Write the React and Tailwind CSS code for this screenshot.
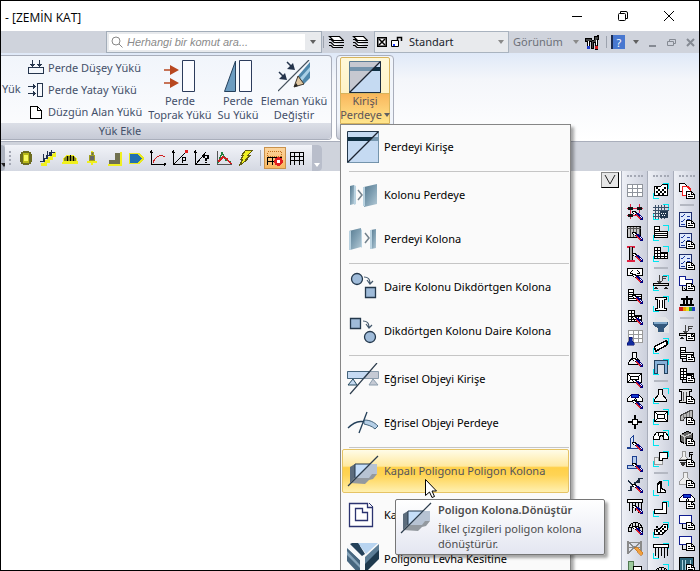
import React from "react";

/* ---------- shared icon parts ---------- */

const Px = ({ children, size = "size-4" }) => (
  <svg viewBox="0 0 16 16" className={`${size} shrink-0`} fill="none" stroke="#000" shapeRendering="crispEdges" aria-hidden="true">
    {children}
  </svg>
);

const Big = ({ children }) => (
  <svg viewBox="0 0 32 32" className="size-8 shrink-0" fill="none" aria-hidden="true">
    {children}
  </svg>
);

const Brush = () => (
  <g stroke="none">
    <path d="M5 7h4v1h1v1h1v3H9v-1H8v-1H6V9H5z" fill="#000" />
    <path d="M6 8h2v1h1v1H7V9H6z" fill="#fff" />
    <path d="M9 9h3v1h1v1h1v1h1v1h1v3h-3v-1h-1v-1h-1v-1h-1v-1H9z" fill="#000080" />
    <path d="M9 10h1v1h1v1h1v1h1v1h1v1h-2v-1h-1v-1h-1v-1h-1z" fill="#e0202c" />
    <path d="M13 12h1v1h1v1h-1v-1h-1z" fill="#fff" />
  </g>
);

const Doc = () => (
  <g>
    <path d="M7.5 8.5h5l3 3v4h-8z" fill="#fff" />
    <path d="M12.5 8.5v3h3M9 11.5h2M9 13.5h5" />
  </g>
);

const Corners = () => <path d="M10 .5h5.5V6M.5 10v5.5H6" stroke="#00e5f0" />;

const Caret = ({ className = "fill-[#606060]" }) => (
  <svg viewBox="0 0 6 4" className={`h-1 w-1.5 shrink-0 ${className}`} aria-hidden="true">
    <path d="M0 0h6L3 4z" />
  </svg>
);

/* ---------- vertical toolbars ---------- */

const rows = <path d="M1.500 1.500h5v5h8v6h-13zM1 4.500h5M1 6.500h6M1 8.500h13M1 10.500h13" fill="#fff" />;
const cells = <path d="M1.500 1.500h6v5h7v6h-13zM1 4.500h6M1 7.500h13M1 10.500h13M4.500 1v11M7.500 6v6M11.500 7v5" fill="#fff" />;
const footing = <path d="M5.500 1.500h4v5l4 5v2h-12v-2l4-5z" fill="#f4f4f4" />;
const tie = (
  <g>
    <path d="M.5 5.500l3-3h9l3 3v3h-5l-2-3-2 3h-6z" fill="#fff" />
    <path d="M4.500 1.500h7v3h-7z" fill="#1038d0" stroke="#000080" />
  </g>
);
const load = (
  <g>
    <path d="M6.500 0v8M4.500 6l2 2 2-2M9.500 6V1.500H14M9.500 3.500H13" stroke="#444" />
    <path d="M.5 8.500h15v2H.5z" fill="#ddd" />
    <path d="M3 11l-2 3h4zM13 11l-2 3h4z" fill="#222" stroke="none" />
  </g>
);
const column = <path d="M2.500 1.500h11v2h-2v9h2v2h-11v-2h2v-9h-2zM6.500 4v8M9.500 4v8" fill="#fff" />;
const dome = <path d="M1.500 12.500v-4l3-4 3-1h2l3 1 3 4v4h-3v-3l-2-2h-4l-2 2v3zM5.500 5v4M8.500 4v4M11.500 5v4M1 8.500h4M11 8.500h4" fill="#ddd" />;
const fringe = <path d="M.5 1.500h15v3H.5zM2.500 4v9M5.500 4v11M8.500 4v9M11.500 4v11M14.500 4v9" fill="#fff" />;
const checks = (
  <g>
    <path d="M.5.5h12v14H.5z" fill="#dfe9fb" stroke="#1c2c6c" />
    <path d="M2 4l1 1 3-3M2 9l1 1 3-3M8 4.500h3M8 7.500h3M2 12.500h4" stroke="#1c38a0" />
  </g>
);
const Checker = ({ d }) => (
  <g>
    <path d={d} fill="#fff" />
    <path d="M3 4h2v2H3zM5 6h2v2H5zM3 8h2v2H3zM7 8h2v2H7zM5 10h2v2H5zM9 10h2v2H9zM9 6h2v2H9zM11 8h2v2h-2zM11 4h2v2h-2z" fill="#000" stroke="none" />
  </g>
);

const modifyTools = [
  ["Aks", <path d="M.5 1.500h15v12H.5zM.5 5.500h15M.5 9.500h15M5.500 1.500v12M10.500 1.500v12" fill="#fff" stroke="#8f949c" />],
  ["Kolon düzenle", <g><path d="M3.500 0v15M12.500 0v9M0 4.500h16M0 11.500h9" stroke="#e02040" /><path d="M1 3h5v3H1zM10 3h5v3h-5zM1 10h5v3H1z" fill="#111" stroke="none" /><Brush /></g>],
  ["Perde düzenle", <g><path d="M.5 1.500h13v11H.5z" fill="#c8c8c8" /><path d="M3.500 2v10M6.500 2v10M9.500 2v10M12 2v8M0 3.500h14" stroke="#555" /><Brush /></g>],
  ["Boy düzenle", <g><path d="M0 .5h8M0 14.500h8" stroke="#e02040" strokeWidth="2" /><path d="M2.500 1v13M5.500 1v13" /><path d="M3 1h2v13H3z" fill="#aaa" stroke="none" /><Brush /></g>],
  ["Kiriş düzenle", <g><path d="M.5 1.500h15v7H.5zM3 6l3-3M13 6l-3-3M3 6h3M10 6h3" fill="#fff" /><Brush /></g>],
  ["Döşeme düzenle", <g>{rows}<Brush /></g>],
  ["Nervür düzenle", <g>{cells}<Brush /></g>],
  ["Temel aks", <g><path d="M1.500.5h14v12h-14zM1.500 4.500h14M1.500 8.500h14M6.500.5v12M11.500.5v12" fill="#fff" stroke="#999" /><path d="M2 7h3v4l2 2v2H0v-2l2-2z" fill="#102a9c" stroke="#000060" strokeWidth=".5" /></g>],
  ["Tekil temel", <g>{footing}<Brush /></g>],
  ["Radye", <g><path d="M.5 1.500h14v9H.5zM3.500 4.500h8v3h-8zM.5 1.500l3 3M14.500 1.500l-3 3M.5 10.500l3-3" fill="#fff" /><Brush /></g>],
  ["Sürekli temel", <g>{tie}<Brush /></g>],
  ["Nokta", <g><path d="M8 1v14M1 8h14" strokeWidth="2" /><path d="M5.500 5.500h5v5h-5z" fill="#fff" /></g>],
  ["Kule", <g><path d="M3.500 12.500v-9l3-3v8l4 2v3h-10v-1z" fill="#dbe6f8" stroke="#1c3f90" /><Brush /></g>],
  ["İstinat", <g><path d="M5.500.5h4v9h4v3h-13v-3h5z" fill="#b8cdec" stroke="#1c3f90" /><Brush /></g>],
  ["Merdiven", <g><path d="M1 13.500h3v-4h4v-4h4v-4h4M1 4l5 4M5 9l8-7" stroke="#1c2c40" strokeWidth="1.500" /><Brush /></g>],
  ["Kazık", <g>{fringe}<Brush /></g>],
  ["Kubbe", <g>{dome}<Brush /></g>],
  ["Çapraz", <g><path d="M1 2l13 11M14 2L1 13M1 1v13M14 1v13M1 2.500h13M1 7.500h13" stroke="#8a8a8a" strokeWidth="1.500" /><path d="M7 8l3-1 6 6-2 3z" fill="#f0a040" stroke="#b06010" strokeWidth=".5" /></g>],
  ["Kesit", <g><path d="M1 0h5v16H1z" fill="#9cc89c" stroke="#507850" /><path d="M6.500 5.500h8V16h-8z" fill="#fff" /></g>],
];

const drawTools = [
  ["Poligon kolon", <g><Corners /><Checker d="M1.500 3.500h6l2-2h5v11h-13z" /></g>],
  ["Izgara", <g><Corners /><path d="M2.500 1v14M5.500 1v14M8.500 1v14M11.500 1v14M0 3.500h16M0 6.500h16M0 9.500h14M0 12.500h14" stroke="#3c5068" /><path d="M7 7h8v7H7z" fill="#233850" stroke="none" /><path d="M8 9h6M9 11.500h4" stroke="#fff" strokeDasharray="1 1" /></g>],
  ["Döşeme", <g><Corners />{rows}</g>],
  ["Kaset", <g><Corners />{cells}</g>],
  null,
  ["Kiriş yükü", <g><Corners />{load}</g>],
  ["Kolon", <g><Corners />{column}</g>],
  ["Başlık", <g stroke="none"><path d="M2 0h10l4 4v12H2z" fill="#e3e5e8" /><path d="M0 5h15v3l-4 3v4H5v-4L0 8z" fill="#34587c" /><path d="M1 5h13v2H1z" fill="#7ea6c8" /></g>],
  ["Perde", <g><Corners /><path d="M1.500 8.500l12-6 1 4-12 7z" fill="#fff" strokeWidth="1.500" /></g>],
  ["Portal", <g><Corners /><path d="M1.500 14.500v-13h13v13h-3v-9h-7v9z" fill="#86b0d8" stroke="#23405c" /></g>],
  null,
  ["Tekil", <g><Corners />{footing}</g>],
  ["Radye plak", <g><Corners /><path d="M1.500 2.500h13v10h-13z" fill="#fff" strokeWidth="1.500" /><path d="M4.500 5.500h7v4h-7zM1.500 2.500l3 3M14.500 2.500l-3 3M1.500 12.500l3-3M14.500 12.500l-3-3" /></g>],
  ["Bağ kirişi", <g><Corners /><path d="M.5 6.500l3-4h9l3 4v3h-5v-3l-2-1-2 1v3h-6zM5.500 3v3M10.500 3v3" fill="#fff" /></g>],
  ["Kademe", <g><Corners /><path d="M1.500 6.500h4v3h4v4h-8z" fill="#eee" stroke="#999" /><path d="M6.500 1.500h8v6h-5v2h-3z" fill="#fff" /></g>],
  null,
  ["Kule çiz", <g><Corners /><path d="M4.500 12.500v-8l3-3h1v7l4 2v2zM7.500 2v10" fill="#fff" strokeWidth="1.500" /></g>],
  ["İstinat çiz", <g><Corners /><path d="M9.500 1.500h4v11h-12v-4h8z" fill="#fff" strokeWidth="1.500" /></g>],
  ["Rampa", <g><Corners /><Checker d="M1.500 7.500h5l4-5h4v5l-5 5h-8z" /></g>],
  ["Kazık çiz", <g><Corners />{fringe}</g>],
  ["Kubbe çiz", <g><Corners />{dome}</g>],
];

const reportTools = [
  ["Kopyala", <g><path d="M.5.5h5l3 3v5h-8z" fill="#fff" /><path d="M3.500 3.500h5l3 3v6h-8z" fill="#fff" stroke="#f02020" strokeWidth="1.500" /><Doc /></g>],
  null,
  ["Kolon kontrol", <g>{checks}<Doc /></g>],
  ["Kiriş kontrol", <g>{checks}<Doc /></g>],
  ["Perde kontrol", <g>{checks}<Doc /></g>],
  ["Poligon raporu", <g><path d="M.5 1.500h6v3h7v6H.5z" fill="#fff" stroke="#101c90" /><path d="M3.500 11v4h3M5 13l2 2" /><Doc /></g>],
  ["Renk skalası", <g><path d="M2 2.500h12M8 0v8M1 8.500h14M4.500 3v5M11.500 3v5" strokeWidth="2" /><path d="M0 11h4v4H0z" fill="#d02020" stroke="none" /><path d="M4 11h3v4H4z" fill="#f0a000" stroke="none" /><path d="M7 11h3v4H7z" fill="#e8e020" stroke="none" /><path d="M10 11h3v4h-3z" fill="#20a040" stroke="none" /><path d="M13 11h3v4h-3z" fill="#2040c0" stroke="none" /></g>],
  null,
  ["Yük raporu", <g>{load}<Doc /></g>],
  ["Döşeme raporu", <g>{rows}<path d="M3.500 12v3h3" /><Doc /></g>],
  ["Kaset raporu", <g>{cells}<path d="M3.500 12v3h3" /><Doc /></g>],
  ["Kolon raporu", <g><path d="M.5 1.500h12v2h-2v9h2v2H.5v-2h2v-9h-2z" fill="#ddd" /><path d="M4.500 4v9M7.500 4v9" stroke="#555" /><Doc /></g>],
  ["Konsol raporu", <g><path d="M1.500 6.500l10-5h2v8l-8-1-1 3h-3z" fill="#bbb" stroke="#444" /><path d="M4.500 5v4M7.500 4v5M10.500 3v5" stroke="#777" /><Doc /></g>],
  ["Hacim raporu", <g><path d="M1.500 4.500l7-3 5 2v8l-8 2-4-2z" fill="#666" /><path d="M1.500 4.500l4 2 8-3M5.500 6v8" stroke="#ccc" /><Doc /></g>],
  ["Zemin yükü", <g><path d="M3.500.5h3v5l3 3h-9l3-3z" fill="#eee" stroke="#999" /><path d="M0 9.500h8M10.500 6V1.500H14M10.500 3.500h3M12.500 4v4" /><path d="M1 11h6l-2 4H3z" fill="#333" stroke="none" /><Doc /></g>],
  ["Temel raporu", <g><path d="M4.500.5h4v5l4 4v3h-12v-3l4-4z" fill="#eee" stroke="#999" /><Doc /></g>],
  ["Bağ raporu", <g>{tie}<Doc /></g>],
  ["Plak raporu", <g><path d="M.5 1.500h12v8H.5z" fill="#fff" stroke="#101c90" /><path d="M3.500 10v4h3" /><Doc /></g>],
  ["Radye raporu", <g><path d="M.5 1.500h12v8H.5z" fill="#fff" stroke="#101c90" /><path d="M3.500 10v4h3" /><Doc /></g>],
  ["Cephe raporu", <g><path d="M.5 1.500h14v13H.5z" fill="#2a6478" /><path d="M3.500 4v10M6.500 4v10M11.500 4v6" stroke="#a8d0dc" /><Doc /></g>],
];

const VerticalBar = ({ label, tools }) => (
  <div role="toolbar" aria-label={label} className="flex w-[26px] flex-col items-center border-l border-[#a9aebb] bg-linear-to-r from-[#eef0f6] to-[#ccd0dc]">
    <div className="mt-1 mb-[3px] h-0.5 w-4 border-t-2 border-dotted border-[#a4a8b4]"></div>
    {tools.map((tool, i) =>
      tool ? (
        <button key={i} aria-label={tool[0]} className="flex h-[21px] w-full shrink-0 items-center justify-center">
          <Px>{tool[1]}</Px>
        </button>
      ) : (
        <div key={i} className="flex h-2 shrink-0 items-center">
          <span className="h-0.5 w-3.5 bg-[#b4b8c2]"></span>
        </div>
      )
    )}
  </div>
);

/* ---------- menu icons ---------- */

const BeamToWall = ({ flip }) => (
  <Big>
    <path d="M.5.500h31v31H.5z" fill="#c5daf2" />
    <path d="M1 6h30v4H1z" fill="#0f2f42" />
    {flip ? (
      <path d="M31 1v30H1z" fill="#c5daf2" fillOpacity=".5" />
    ) : (
      <g>
        <path d="M1 1h30L1 31z" fill="#c6c8d0" />
        <path d="M1 6h25l-4 4H1z" fill="#7494ac" />
      </g>
    )}
    {flip && <path d="M26 6h5v4h-9z" fill="#7898b0" />}
    <path d="M.5.500h31v31H.5z" stroke={flip ? "#24384c" : "#5c7c94"} />
    <path d="M31.500.500v31H.5" stroke={flip ? "#7494ac" : "#1c2c40"} />
    <path d="M.5 31.500l31-31" stroke="#1c2430" strokeWidth="1.200" />
  </Big>
);

const SteelDefs = () => (
  <defs>
    <linearGradient id="steel" x1="0" y1="0" x2="1" y2="1">
      <stop offset="0" stopColor="#55798f" />
      <stop offset=".5" stopColor="#7f9fb2" />
      <stop offset="1" stopColor="#b4cad6" />
    </linearGradient>
  </defs>
);

const ColumnToWall = () => (
  <Big>
    <SteelDefs />
    <path d="M3 7l4-1v19l-4 1z" fill="url(#steel)" />
    <path d="M7 6l2 1v18l-2 1z" fill="#b9d2e0" />
    <path d="M11 11l4 5-4 5" stroke="#74828c" strokeWidth="1.500" />
    <path d="M17 8l13-3v20l-13 3z" fill="url(#steel)" />
    <path d="M16 8h2v19h-2z" fill="#b9d2e0" />
  </Big>
);

const WallToColumn = () => (
  <Big>
    <SteelDefs />
    <path d="M2 8l12-3v19L3 27z" fill="url(#steel)" />
    <path d="M2 8h2v19H2zM14 6l1 1v17l-1 1z" fill="#b9d2e0" />
    <path d="M18 10l4 5-4 5" stroke="#74828c" strokeWidth="1.500" />
    <path d="M24 7l5-1v19l-5 1z" fill="url(#steel)" />
    <path d="M23 7h2v19h-2z" fill="#b9d2e0" />
  </Big>
);

const CircleToSquare = () => (
  <Big>
    <circle cx="10" cy="8" r="5.500" fill="#9fbbd9" stroke="#24384c" strokeWidth="1.300" />
    <path d="M17 6c5 0 6 3 6 6M20 9l3 4 3-3" stroke="#44586c" strokeWidth="1.200" />
    <path d="M18.500 16.500h10v10h-10z" fill="#9fbbd9" stroke="#24384c" strokeWidth="1.300" />
  </Big>
);

const SquareToCircle = () => (
  <Big>
    <path d="M3.500 3.500h10v10h-10z" fill="#9fbbd9" stroke="#24384c" strokeWidth="1.300" />
    <path d="M16 6c5 0 6 3 6 6M19 9l3 4 3-3" stroke="#44586c" strokeWidth="1.200" />
    <circle cx="23" cy="22" r="5.500" fill="#9fbbd9" stroke="#24384c" strokeWidth="1.300" />
  </Big>
);

const CurveToBeam = () => (
  <Big>
    <path d="M.5 8.500h31v7H.5z" fill="#c5cad4" stroke="#8a9cac" />
    <path d="M23 8.500H.5v7H17z" fill="#c5daf2" stroke="#44647c" />
    <path d="M6 16l-5 6h9z" fill="#c5daf2" stroke="#24485c" />
    <path d="M26 16l-4 6h9z" fill="#c5cad4" stroke="#8a9cac" />
    <path d="M3 31L30 0" stroke="#2c3c4c" strokeWidth="1.200" />
  </Big>
);

const CurveToWall = () => (
  <Big>
    <path d="M1 21C9 13 17 12 30 20" stroke="#24405a" strokeWidth="1.300" />
    <path d="M17 13c6 0 10 2 14 6l-3 3c-3-3-7-4-11-5z" fill="#b4cee6" stroke="#44647c" />
    <path d="M20 5l-8 21" stroke="#24405a" strokeWidth="1.300" />
  </Big>
);

const PolygonColumn = () => (
  <Big>
    <path d="M3 12l5-3v14l-5 5z" fill="#5c6c7c" />
    <path d="M3 28l5-6h10l4-3h8l-4 5-4 1-4 4z" fill="#93999f" />
    <path d="M8 9h22v10h-5l-3 4H8z" fill="#b7c3d3" />
    <path d="M8 9h16L8 23z" fill="#c5def8" />
    <path d="M8 23V9h15" stroke="#24384c" />
    <path d="M1 31L31 1" stroke="#2c3c4c" strokeWidth="1.200" />
  </Big>
);

const PolygonSlab = () => (
  <Big>
    <path d="M2.500 4.500h18v4h5v19h-23z" fill="#fff" stroke="#2c3470" strokeWidth="1.300" />
    <path d="M8.500 9.500h7v4h5v8h-12z" fill="#fff" stroke="#2c3470" strokeWidth="1.300" />
    <path d="M22 4l4 4" stroke="#2c3470" />
  </Big>
);

const PlateSection = () => (
  <Big>
    <path d="M0 4l13 13v15L0 18z" fill="#46667f" />
    <path d="M0 8l13 14v3L0 12z" fill="#86a4ba" />
    <path d="M0 2h4l13 13v17h-4V17L0 5z" fill="#f6f8fa" />
    <path d="M5 0h8v3l5 8-3 2L3 1z" fill="#24415a" />
    <path d="M11 0h20L19 11z" fill="#b8d4f0" />
    <path d="M32 1v13L18 29V14z" fill="#5c7d96" />
    <path d="M32 7v9L18 30V21z" fill="#1f3a4e" />
  </Big>
);

const menuItems = [
  { label: "Perdeyi Kirişe", icon: <BeamToWall flip /> },
  null,
  { label: "Kolonu Perdeye", icon: <ColumnToWall /> },
  { label: "Perdeyi Kolona", icon: <WallToColumn /> },
  null,
  { label: "Daire Kolonu Dikdörtgen Kolona", icon: <CircleToSquare /> },
  { label: "Dikdörtgen Kolonu Daire Kolona", icon: <SquareToCircle /> },
  null,
  { label: "Eğrisel Objeyi Kirişe", icon: <CurveToBeam /> },
  { label: "Eğrisel Objeyi Perdeye", icon: <CurveToWall /> },
  null,
  { label: "Kapalı Poligonu Poligon Kolona", icon: <PolygonColumn />, active: true },
  { label: "Kapalı Poligonu Döşemeye", icon: <PolygonSlab /> },
  { label: "Poligonu Levha Kesitine", icon: <PlateSection /> },
];

const DropMenu = () => (
  <div role="menu" className="absolute top-full left-0 z-10 w-[231px] border border-[#868686] bg-[#fafafa] text-black shadow-[3px_3px_3px_rgba(0,0,0,0.35)]">
    {menuItems.map((item, i) =>
      item ? (
        <button
          key={i}
          role="menuitem"
          className={
            item.active
              ? "mx-px flex h-11 w-[227px] items-center gap-[5px] rounded-xs border border-[#e5c365] bg-[linear-gradient(#fffce8,#ffe9a0_38%,#ffd048_42%,#ffd455_60%,#fff0b0)] pl-1 text-left text-[#54545c]"
              : "flex h-11 w-full items-center gap-[5px] pl-1.5 text-left"
          }
        >
          {item.icon}
          {item.label}
        </button>
      ) : (
        <div key={i} className="flex h-1 items-center pr-px pl-2">
          <span className="h-px w-full bg-[#c5c5c5]"></span>
        </div>
      )
    )}

    {/* tooltip and pointer of the hovered item */}
    <div role="tooltip" className="absolute top-[374px] left-[54px] flex h-14 w-[210px] gap-1.5 rounded-xs border border-[#767676] bg-linear-to-b from-white to-[#e4e6f1] pt-0.5 pl-1 text-[#4c4c4c] shadow-[3px_3px_3px_rgba(0,0,0,0.35)]">
      <PolygonColumn />
      <div className="leading-[15px]">
        <p className="font-semibold">Poligon Kolona.Dönüştür</p>
        <p className="mt-1">
          İlkel çizgileri poligon kolona
          <br />
          dönüştürür.
        </p>
      </div>
    </div>
    <svg viewBox="0 0 12 19" className="absolute top-[354px] left-[84px] h-[19px] w-3" aria-hidden="true">
      <path d="M.5.500v16l4-3.500 2.500 5.500 2.500-1L7 12h4.500z" fill="#fff" stroke="#000" />
    </svg>
  </div>
);

/* ---------- ribbon ---------- */

const loadButtons = [
  {
    label: "Perde Düşey Yükü",
    icon: <path d="M.5 7.500h15v6H.5zM4.500 0v6M11.500 0v6M2.500 4l2 2 2-2M9.500 4l2 2 2-2" stroke="#24344c" />,
  },
  {
    label: "Perde Yatay Yükü",
    icon: <path d="M9.500 1.500h5v13h-5zM0 4.500h7M0 11.500h7M5 2.500l2 2-2 2M5 9.500l2 2-2 2" stroke="#24344c" />,
  },
  {
    label: "Düzgün Alan Yükü",
    icon: <path d="M2.500 2.500h7l4 4v8h-11zM9.500 2.500v4h4" fill="#fff" />,
  },
];

const SoilIcon = () => (
  <Big>
    <path d="M0 10h9M0 23h9" stroke="#b84820" strokeWidth="1.500" />
    <path d="M6 5l9 5-9 5zM6 18l9 5-9 5z" fill="#b84820" />
    <path d="M18.500.500h12v31h-12z" fill="#fbfcff" stroke="#2c3c5c" />
  </Big>
);

const WaterIcon = () => (
  <Big>
    <path d="M13.500 1v30.500h-11z" fill="#6c9cc0" stroke="#24405c" />
    <path d="M17.500.500h12v31h-12z" fill="#fbfcff" stroke="#2c3c5c" />
  </Big>
);

const EditIcon = () => (
  <Big>
    <path d="M0 31L31 0" stroke="#44505c" strokeWidth="1.200" />
    <path d="M9 2l5 5M1 12l5 5" stroke="#24344c" strokeWidth="1.500" />
    <path d="M17 10l-8-1 6-6zM9 20l-8-1 6-6z" fill="#24344c" />
    <path d="M20 16L32 2v16l-7 7z" fill="#4f88ac" />
    <path d="M22 18L32 7v4L24 21z" fill="#a9d0e6" />
    <path d="M20 16l6 8-10 3z" fill="#dfc6a0" stroke="#403830" />
    <path d="M18 23l2 3-4 1z" fill="#222" />
  </Big>
);

const BigButton = ({ icon, lines, width }) => (
  <button className={`flex h-full flex-col items-center gap-0.5 pt-1 leading-[14px] whitespace-nowrap ${width}`}>
    {icon}
    <span>
      {lines[0]}
      <br />
      {lines[1]}
    </span>
  </button>
);

const Ribbon = () => (
  <div className="flex h-[89px] gap-1 border-b border-[#a9aebb] bg-linear-to-b from-[#dfe9f8] via-[#f4f6fa] via-30% to-white pt-0.5 text-[#44506a]">
    <section className="flex h-[85px] w-[331px] shrink-0 flex-col rounded-r border border-l-0 border-[#a9aebb] bg-linear-to-b from-[#f1f5fb] to-[#fdfdfe]">
      <div className="flex h-[69px] items-start">
        <button className="flex h-full w-6 shrink-0 items-center pl-px">Yük</button>
        <div className="flex h-full w-[121px] shrink-0 flex-col pt-px pl-[3px]">
          {loadButtons.map((b) => (
            <button key={b.label} className="flex h-[22px] items-center gap-1 whitespace-nowrap">
              <Px>{b.icon}</Px>
              {b.label}
            </button>
          ))}
        </div>
        <BigButton icon={<SoilIcon />} lines={["Perde", "Toprak Yükü"]} width="w-[68px]" />
        <BigButton icon={<WaterIcon />} lines={["Perde", "Su Yükü"]} width="w-12" />
        <BigButton icon={<EditIcon />} lines={["Eleman Yükü", "Değiştir"]} width="w-16" />
      </div>
      <h2 className="flex h-4 items-center justify-center rounded-br bg-linear-to-b from-[#dcdfe7] to-[#c6cad6] pr-23">Yük Ekle</h2>
    </section>
    <section className="h-[85px] w-[58px] shrink-0 rounded border border-[#a9aebb] bg-linear-to-b from-[#f1f5fb] from-80% to-[#c6cad6] px-[3px] pt-px">
      <div className="relative">
        <button aria-haspopup="menu" className="flex h-[67px] w-full flex-col items-center rounded-t-xs border border-[#d8b45c] bg-linear-to-b from-[#fff8d8] to-[#ffefb8] leading-[14px]">
          <span className="flex h-9 w-full items-center justify-center border-b border-[#d8b45c] pt-0.5">
            <BeamToWall />
          </span>
          <span className="w-full flex-1 bg-linear-to-b from-[#f9b75c] to-[#ffe58c] text-[#5c5458]">
            Kirişi
            <span className="flex items-center justify-center gap-0.5">
              Perdeye
              <Caret />
            </span>
          </span>
        </button>
        <DropMenu />
      </div>
    </section>
  </div>
);

/* ---------- horizontal toolbar ---------- */

const quickTools = [
  ["Kolon", <g stroke="none"><path d="M5 1h6v1h2v2h1v8h-1v2h-2v1H5v-1H3v-2H2V4h1V2h2z" fill="#6c6c20" /><path d="M5 3h6v10H5z" fill="#b8b818" /><path d="M6 5h4v6H6z" fill="#f8f860" /></g>],
  ["Merdiven", <g><path d="M1 14h4v-3h3V8h3V5h3V2" stroke="#f0f020" strokeWidth="3" /><path d="M0 11.500h4v-3h3v-3h3v-3h5M3.500 12V4M7.500 9V1M11.500 6V0" strokeWidth="1.500" stroke="#203050" /></g>],
  ["Kubbe", <g><path d="M0 12.500h16" stroke="#f0f020" strokeWidth="2" /><path d="M1 11c0-8 14-8 14 0z" fill="#8c8c20" stroke="#f0f020" /><path d="M5.500 11V6M8 11V5M11.500 11V6" /></g>],
  ["Kule", <g><path d="M8 1v14M3 11.500h10" stroke="#f0f020" strokeWidth="2" /><path d="M5.500 5.500h5v5h-5zM7 2h2v3H7z" fill="#666" stroke="#a0a020" /></g>],
  ["İstinat", <g><path d="M9 3h5v11H3v-4h6z" fill="#707050" stroke="none" /><path d="M14.500 2v12.500H2" stroke="#f0f020" strokeWidth="2" /></g>],
  ["Plak", <path d="M1.500 3.500h9l5 5-5 5h-9z" fill="#2070b0" stroke="#e8e820" strokeWidth="1.500" />],
  ["Grafik", <g><path d="M1.500 1v13.500H16M0 3l1.500-2L3 3M14 13l2 1.500-2 1.500" /><path d="M3 13c2-7 8-9 12-6" stroke="#d02020" /></g>],
  ["Grafik P", <g><path d="M1.500 1v13.500H16M2 14L14 2M0 3l1.500-2L3 3" /><path d="M13 0h3v3h-3z" fill="#e02020" stroke="none" /><path d="M10.500 13V7.500h3v3h-3" /></g>],
  ["Grafik sorgu", <g><path d="M1.500 1v13.500H16M2 14L12 2M0 3l1.500-2L3 3" /><path d="M10 7.500V5.500h4v3h-2v2M12 11.500v1.500" strokeWidth="1.500" /></g>],
  ["Spektrum", <g><path d="M1.500 1v13.500H16" stroke="#555" /><path d="M2 13l4-10 4 7 5 2" stroke="#208040" strokeWidth="1.500" /><path d="M2 12l5-5 4 2 4 5" stroke="#d02020" strokeWidth="1.500" /></g>],
  ["Hesapla", <path d="M7.500.5h7l-5 5h3l-5 4h2l-8 6 3-6h-2l3-4h-2z" fill="#f0f020" stroke="#605c10" />],
];

const frame = <path d="M1.500 15V2.500h13V15M1.500 6.500h13M1.500 10.500h13M5.500 3v12M10.500 3v12" />;

const QuickBar = () => (
  <div className="flex h-[29px] items-center bg-[#cfd3dc] pt-0.5">
    <span className="flex h-[26px] w-1 items-end rounded-r bg-[#aeb4c0] pb-1">
      <Caret className="fill-[#222]" />
    </span>
    <div role="toolbar" aria-label="Hızlı erişim" className="flex h-[26px] w-[317px] items-center rounded-r bg-linear-to-b from-[#f1f3f8] to-[#d4d8e2]">
      <span className="ml-1 h-3.5 w-1.5 border-l-2 border-dotted border-[#a4a8b4]"></span>
      {quickTools.map(([name, icon]) => (
        <button key={name} aria-label={name} className="flex h-[22px] w-[22px] shrink-0 items-center justify-center">
          <Px>{icon}</Px>
        </button>
      ))}
      <span className="mx-[3px] h-4 w-px bg-[#a9aebb]"></span>
      <button aria-label="Çerçeve göster" className="flex size-[22px] shrink-0 items-center justify-center border border-[#c8914c] bg-linear-to-b from-[#fcd49c] to-[#f8b860]">
        <Px>
          <path d="M.5 1.500h14v5H.5z" stroke="#c07020" strokeDasharray="1 1" />
          <path d="M.5 15V7.500h14M5.500 8v7M.5 11.500h9" />
          <circle cx="11.500" cy="11.500" r="3" fill="#fff" stroke="#e02020" strokeWidth="2.500" />
        </Px>
      </button>
      <button aria-label="Çerçeve" className="flex size-[22px] shrink-0 items-center justify-center">
        <Px>{frame}</Px>
      </button>
      <span className="ml-auto flex h-full w-2.5 items-end justify-center rounded-r bg-[#b9becb] pb-1">
        <Caret className="fill-white" />
      </span>
    </div>
  </div>
);

/* ---------- caption and command rows ---------- */

const Layers = () => (
  <Px>
    <path d="M1.500 2.500h10l4 4h-10zM1 5.500h2l3 3h10M1 8.500h2l3 3h10M1 11.500h2l2 2h10" fill="#fff" strokeWidth="1.200" shapeRendering="auto" />
  </Px>
);

const TitleBar = () => (
  <header className="flex h-[30px] items-center bg-white">
    <h1 className="pt-1 pl-1 font-['Open_Sans','Noto_Sans',sans-serif] text-xs text-black">- [ZEMİN KAT]</h1>
    <div className="ml-auto flex">
      <button aria-label="Küçült" className="flex h-7 w-[46px] items-center justify-center">
        <svg viewBox="0 0 10 10" className="size-2.5" stroke="#000" fill="none"><path d="M0 5.500h10" /></svg>
      </button>
      <button aria-label="Geri yükle" className="flex h-7 w-[46px] items-center justify-center">
        <svg viewBox="0 0 10 10" className="size-2.5" stroke="#000" fill="none"><rect x=".5" y="2.500" width="7" height="7" rx="1" /><path d="M2.500 2V.5h5.500q1.500 0 1.500 1.500v5.500H8" /></svg>
      </button>
      <button aria-label="Kapat" className="mr-[7px] flex h-7 w-[46px] items-center justify-center">
        <svg viewBox="0 0 10 10" className="size-2.5" stroke="#000" fill="none"><path d="M0 0l10 10M10 0L0 10" /></svg>
      </button>
    </div>
  </header>
);

const CommandRow = () => (
  <div className="flex h-[22px] items-center justify-end bg-[#cfd3dc]">
    <label className="flex h-full w-[216px] items-center border border-[#a3adb9] bg-[#e8eaed] pl-0.5">
      <span className="flex h-4 flex-1 items-center gap-1 bg-white pl-0.5">
        <svg viewBox="0 0 12 12" className="size-3 shrink-0" fill="none" stroke="#888" aria-hidden="true">
          <circle cx="5" cy="5" r="4" />
          <path d="M8 8l3.500 3.500" />
        </svg>
        <input
          aria-label="Komut ara"
          placeholder="Herhangi bir komut ara..."
          className="w-40 bg-transparent font-['Liberation_Sans',Arial,sans-serif] text-[11px] italic outline-none placeholder:text-[#8a8a8a]"
        />
      </span>
      <span className="flex w-4 justify-center"><Caret /></span>
    </label>
    <span className="ml-px h-3 w-px bg-[#9da3ae]"></span>
    <button aria-label="Katman" className="flex w-6 justify-center"><Layers /></button>
    <button aria-label="Katmanlar" className="flex w-6 justify-center"><Layers /></button>
    <div className="ml-0.5 flex h-full w-[135px] items-center gap-1 border border-[#a9b3bf] bg-[#e8eaed] px-0.5">
      <svg viewBox="0 0 10 10" className="size-2.5 shrink-0" fill="#fff" stroke="#000" aria-hidden="true"><path d="M.5.5h9v9h-9z" strokeWidth="2" /><path d="M2 2l6 6M8 2L2 8" strokeWidth="1.500" /></svg>
      <svg viewBox="0 0 12 12" className="size-3 shrink-0" fill="#fff" stroke="#000" aria-hidden="true"><path d="M.5 4.500h7v6h-7z" /><path d="M6.500 4V1.500h4V5" fill="none" strokeWidth="1.500" /><path d="M2 8h2v2H2z" fill="#2040ff" stroke="none" /></svg>
      <select aria-label="Görünüm stili" className="min-w-0 flex-1 appearance-none bg-transparent pl-0.5 text-[#20242c] outline-none">
        <option>Standart</option>
      </select>
      <Caret className="mr-0.5 fill-[#8a8a8a]" />
    </div>
    <button className="flex w-[70px] items-center justify-between pl-1 text-[#6c7078]">
      Görünüm
      <Caret className="fill-[#8a8a8a]" />
    </button>
    <button aria-label="Araçlar" className="ml-[3px] flex w-5 justify-center">
      <Px>
        <path d="M1 4h6l1 2h2l1-4 2 1 1-2 1 3-2 3v8h-2V8H9v6H7V7H5v7H3V7H1z" fill="#444" />
        <path d="M3 12h3v3H3z" fill="#2040d0" stroke="none" />
        <path d="M11 12h3v3h-3z" fill="#d02020" stroke="none" />
        <path d="M4.500 7v5M12.500 6v5" stroke="#fff" />
      </Px>
    </button>
    <span className="mx-1 h-3 w-px bg-[#9da3ae]"></span>
    <button aria-label="Yardım" className="flex h-3.5 w-3.5 items-center justify-center border-l-2 border-[#1c2c50] bg-[#4878d0] text-[11px] leading-none text-white">?</button>
    <button aria-label="Yardım menüsü" className="flex w-[22px] justify-center"><Caret /></button>
    <div className="flex items-center gap-2.5 pr-1 pl-px text-[#858a93]">
      <svg viewBox="0 0 9 9" className="size-[9px]" stroke="currentColor" fill="none"><path d="M1 8h7" strokeWidth="2" /></svg>
      <svg viewBox="0 0 9 9" className="size-[9px]" stroke="currentColor" fill="none"><path d="M.5 3.500h6v4h-6zM2.500 3V1.500h6v4H7" /></svg>
      <svg viewBox="0 0 9 9" className="size-[9px]" stroke="currentColor" fill="none"><path d="M1 1l7 7M8 1L1 8" strokeWidth="2" /></svg>
    </div>
  </div>
);

const App = () => {
  return (
    <div className="flex h-screen flex-col overflow-hidden border border-black bg-white font-['Noto_Sans','Open_Sans',sans-serif] text-[11px]">
      <TitleBar />
      <CommandRow />
      <Ribbon />
      <QuickBar />
      <main className="flex min-h-0 flex-1 bg-white">
        <button aria-label="Görünüm seç" className="mt-px mr-0.5 ml-auto flex h-4 w-[18px] items-center justify-center border border-t-[#888] border-r-black border-b-black border-l-[#888] bg-[#e6e6e6]">
          <svg viewBox="0 0 12 10" className="h-2.5 w-3" fill="none" stroke="#222"><path d="M1 0l5 9 5-9" /></svg>
        </button>
        <div className="flex overflow-hidden">
          <VerticalBar label="Düzenle" tools={modifyTools} />
          <VerticalBar label="Çizim" tools={drawTools} />
          <VerticalBar label="Raporlar" tools={reportTools} />
        </div>
      </main>
    </div>
  );
};

export default App;
